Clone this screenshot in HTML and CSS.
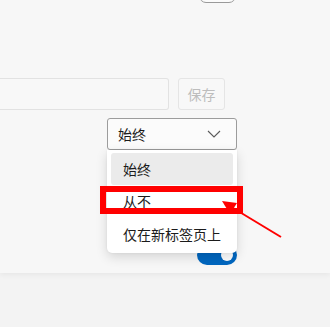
FILE: index.html
```html
<!DOCTYPE html>
<html lang="zh-CN">
<head>
<meta charset="utf-8">
<link rel="stylesheet" href="styles.css">
</head>
<body>
<div class="card">
  <div class="top-row"><div class="top-btn"></div></div>
  <div class="input-row">
    <div class="text-input"></div>
    <div class="save-btn">保存</div>
  </div>
  <div class="select-row">
    <div class="select">
      <span class="select-label">始终</span>
      <svg class="chevron" width="14" height="8" viewBox="0 0 14 8"><path d="M1 1 L7 7 L13 1" fill="none" stroke="#5a5a5a" stroke-width="1.1"/></svg>
    </div>
  </div>
  <div class="toggle-row"><div class="toggle"><div class="knob"></div></div></div>
</div>
<div class="menu">
  <div class="menu-item active">始终</div>
  <div class="menu-item">从不</div>
  <div class="menu-item">仅在新标签页上</div>
</div>
<div class="highlight"></div>
<svg class="arrow" width="330" height="327" viewBox="0 0 330 327">
  <line x1="233" y1="208" x2="281" y2="237" stroke="#f00" stroke-width="2"/>
  <polygon points="222,201 237,203 230,214" fill="#f00"/>
</svg>
</body>
</html>
```

FILE: styles.css
```css
html, body {
  margin: 0;
  padding: 0;
  background: #f3f3f3;
  font-family: "Noto Sans CJK SC", "Noto Sans", sans-serif;
  width: 330px;
  height: 327px;
  overflow: hidden;
}
.card {
  background: #f7f7f7;
  height: 273px;
  box-shadow: 0 2px 5px rgba(0,0,0,0.05);
  display: flex;
  flex-direction: column;
}
.top-row {
  height: 0;
  padding-left: 199px;
}
.top-btn {
  width: 35px;
  height: 20px;
  margin-top: -19px;
  border: 1px solid #9a9a9a;
  border-radius: 7px;
  background: #fbfbfb;
}
.input-row {
  display: flex;
  gap: 9px;
  margin-top: 78px;
  height: 32px;
}
.text-input {
  width: 168px;
  height: 30px;
  border: 1px solid #e2e2e2;
  border-left: none;
  border-radius: 0 3px 3px 0;
  background: #f8f8f8;
}
.save-btn {
  width: 45px;
  height: 30px;
  border: 1px solid #e5e5e5;
  border-radius: 3px;
  color: #bdbdbd;
  font-size: 14px;
  display: flex;
  align-items: center;
  justify-content: center;
  background: #f8f8f8;
}
.select-row {
  padding-left: 107px;
  margin-top: 8px;
}
.select {
  height: 30px;
  border: 1px solid #9c9c9c;
  border-radius: 3px;
  background: #fbfbfb;
  display: flex;
  align-items: center;
  justify-content: space-between;
  padding: 0 15px 0 10px;
  box-sizing: content-box;
  width: 103px;
  color: #1b1b1b;
  font-size: 14px;
}
.select-label { line-height: 1; }
.chevron { display: block; }
.toggle-row {
  padding-left: 197px;
  margin-top: 95px;
}
.toggle {
  width: 40px;
  height: 20px;
  border-radius: 10px;
  background: #0067c0;
  display: flex;
  align-items: center;
  justify-content: flex-end;
  padding-right: 4px;
  box-sizing: border-box;
}
.knob {
  width: 12px;
  height: 12px;
  border-radius: 50%;
  background: #fff;
}
.menu {
  position: absolute;
  left: 107px;
  top: 150px;
  width: 130px;
  height: 103px;
  box-sizing: border-box;
  padding: 3px 4px;
  background: #fff;
  border-radius: 0 0 5px 5px;
  box-shadow: 0 4px 12px rgba(0,0,0,0.14), 0 0 2px rgba(0,0,0,0.08);
  display: flex;
  flex-direction: column;
}
.menu-item {
  height: 32px;
  padding-left: 12px;
  display: flex;
  align-items: center;
  font-size: 14px;
  color: #1b1b1b;
  border-radius: 3px;
  flex: none;
}
.menu-item:nth-child(3) { height: 33px; }
.menu-item.active { background: #ebebeb; }
.highlight {
  position: absolute;
  left: 100px;
  top: 186px;
  width: 143px;
  height: 28px;
  box-sizing: border-box;
  border: 6px solid #ff0000;
}
.arrow {
  position: absolute;
  left: 0;
  top: 0;
}
```
